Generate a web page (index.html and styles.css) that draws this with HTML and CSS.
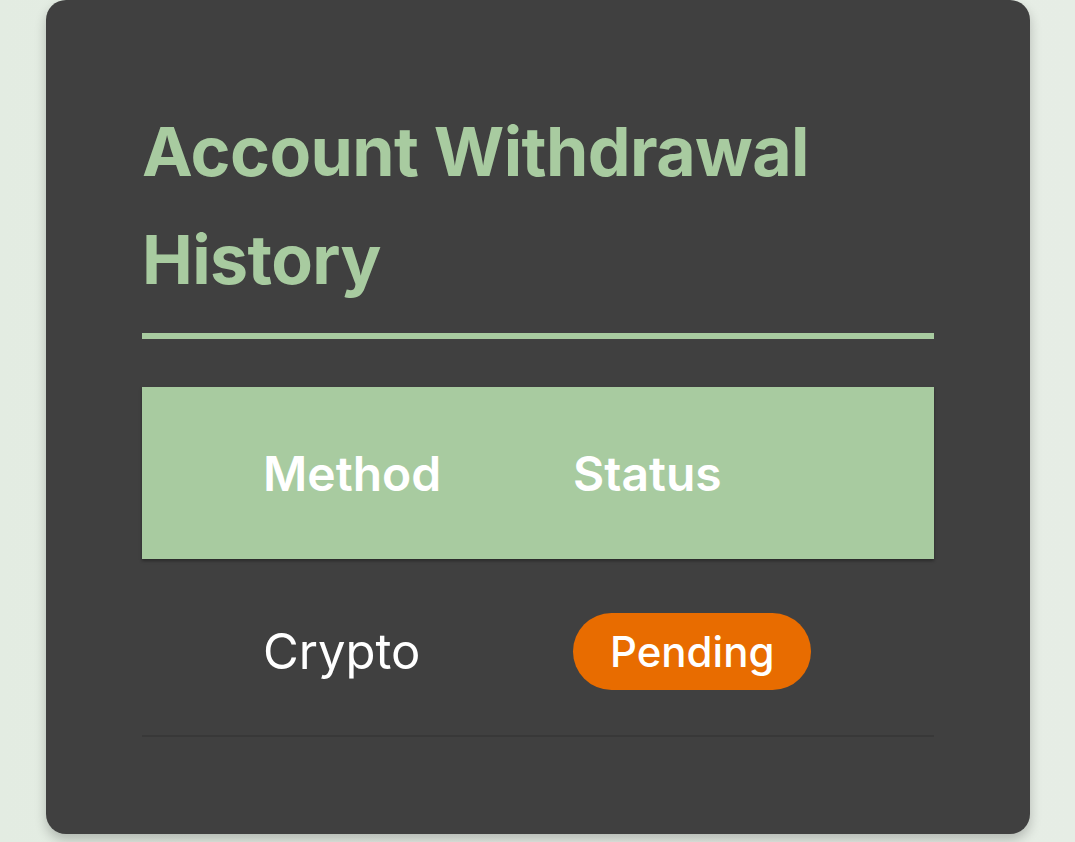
FILE: index.html
```html
<!DOCTYPE html>
<html lang="en">
<head>
<meta charset="utf-8">
<title>Account Withdrawal History</title>
<link rel="stylesheet" href="styles.css">
</head>
<body>
<main class="card">
  <h1 class="title">Account Withdrawal History</h1>
  <div class="table">
    <div class="thead">
      <div class="cell">Method</div>
      <div class="cell">Status</div>
    </div>
    <div class="row">
      <div class="cell">Crypto</div>
      <div class="cell"><span class="pill">Pending</span></div>
    </div>
  </div>
</main>
</body>
</html>
```
FILE: styles.css
```css
html, body {
  margin: 0;
  padding: 0;
}
body {
  width: 1075px;
  height: 842px;
  overflow: hidden;
  background: linear-gradient(90deg, #e3ece2 0%, #e8eee7 50%, #e6ede5 100%);
  font-family: Inter, "Noto Sans", sans-serif;
}
.card {
  box-sizing: border-box;
  margin-left: 46px;
  width: 984px;
  height: 834px;
  background: #404040;
  border-radius: 20px;
  box-shadow: 0 6px 12px rgba(0, 0, 0, 0.22);
  padding: 97px 96px 0 96px;
}
.title {
  margin: 0;
  color: #a8cba0;
  font-size: 68px;
  font-weight: 700;
  line-height: 108px;
  letter-spacing: -0.6px;
  padding-bottom: 20px;
  border-bottom: 6px solid #a8cba0;
}
.table {
  margin-top: 48px;
}
.thead {
  display: grid;
  grid-template-columns: 310px 1fr;
  height: 172px;
  align-items: center;
  padding-left: 121px;
  background: #a8cba0;
  color: #ffffff;
  font-size: 48px;
  font-weight: 600;
  box-shadow: 0 2px 3px rgba(0, 0, 0, 0.35);
}
.row {
  display: grid;
  grid-template-columns: 310px 1fr;
  height: 168px;
  padding-top: 8px;
  align-items: center;
  padding-left: 121px;
  color: #ffffff;
  font-size: 49px;
  font-weight: 400;
  border-bottom: 2px solid #383838;
}
.pill {
  display: inline-block;
  background: #e86c00;
  color: #ffffff;
  border-radius: 40px;
  padding: 0 37px;
  height: 77px;
  line-height: 77px;
  font-size: 42px;
  font-weight: 500;
}
```
